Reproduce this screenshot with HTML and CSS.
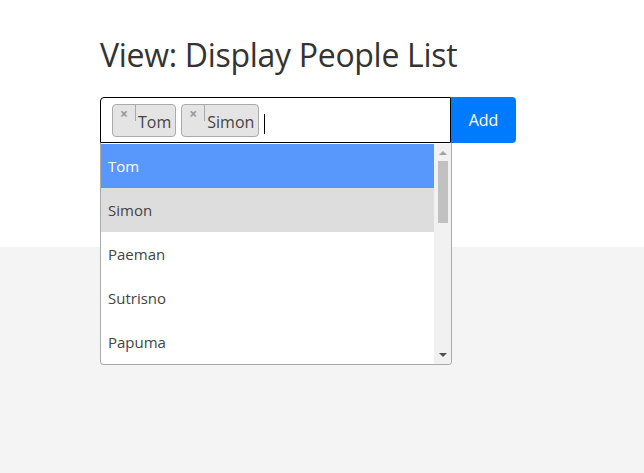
FILE: index.html
```html
<!DOCTYPE html>
<html lang="en">
<head>
  <meta charset="UTF-8" />
  <title>Display People List</title>
  <link rel="stylesheet" href="styles.css">
</head>
<body>
  <div class="top">
    <div class="container">
      <h1>View: Display People List</h1>

      <div class="input-group">
        <div class="picker">
          <div class="selection">
            <span class="tag"><span class="remove">×</span>Tom</span>
            <span class="tag"><span class="remove">×</span>Simon</span>
            <span class="caret"></span>
          </div>
          <div class="dropdown">
            <ul class="options">
              <li class="highlighted">Tom</li>
              <li class="selected">Simon</li>
              <li>Paeman</li>
              <li>Sutrisno</li>
              <li>Papuma</li>
            </ul>
            <div class="scrollbar">
              <span class="arrow up"></span>
              <span class="thumb"></span>
              <span class="arrow down"></span>
            </div>
          </div>
        </div>
        <button class="btn">Add</button>
      </div>
    </div>
  </div>
  <div class="bottom"></div>
</body>
</html>
```

FILE: styles.css
```css
html, body {
  height: 100%;
}

body {
  margin: 0;
  background: #fff;
  font-family: "Open Sans", "Noto Sans", sans-serif;
  color: #333;
  display: flex;
  flex-direction: column;
}

.top {
  background: #fff;
  height: 247px;
  flex: none;
  position: relative;
  z-index: 2;
}

.bottom {
  flex: 1;
  background: #f4f4f4;
}

.container {
  padding: 33px 0 0 100px;
}

h1 {
  margin: 0 0 20px;
  font-size: 32px;
  font-weight: 400;
  line-height: 44px;
  letter-spacing: -0.3px;
  color: #333;
}

.input-group {
  display: flex;
  align-items: flex-start;
}

.picker {
  position: relative;
  width: 351px;
}

.selection {
  box-sizing: border-box;
  height: 46px;
  border: 1px solid #000;
  border-radius: 4px 0 0 0;
  padding: 6px 0 0 11px;
  display: flex;
  align-items: flex-start;
  gap: 5px;
}

.tag {
  box-sizing: border-box;
  height: 33px;
  display: inline-flex;
  align-items: flex-start;
  background: #e4e4e4;
  border: 1px solid #aaa;
  border-radius: 4px;
  padding: 6px 4px 0 0;
  font-size: 16px;
  line-height: 22px;
  color: #444;
}

.tag .remove {
  box-sizing: border-box;
  height: 16px;
  margin-top: -6px;
  margin-right: 2px;
  padding: 1px 7px 0 7px;
  border-right: 1px solid #aaa;
  font-size: 14px;
  font-weight: 700;
  line-height: 15px;
  color: #999;
}

.caret {
  width: 1px;
  height: 20px;
  background: #000;
  margin: 10px 0 0 0;
}

.dropdown {
  position: absolute;
  top: 46px;
  left: 0;
  z-index: 5;
  box-sizing: border-box;
  width: 352px;
  padding-top: 1px;
  border: 1px solid #aaa;
  border-top: none;
  border-radius: 0 0 4px 4px;
  background: #fff;
  display: flex;
  overflow: hidden;
}

.options {
  list-style: none;
  margin: 0;
  padding: 0;
  flex: 1;
}

.options li {
  height: 44px;
  line-height: 44px;
  padding-left: 7px;
  font-size: 15px;
  color: #444;
}

.options li.highlighted {
  background: #5897fb;
  color: #fff;
}

.options li.selected {
  background: #ddd;
}

.scrollbar {
  width: 17px;
  background: #f1f1f1;
  display: flex;
  flex-direction: column;
  align-items: center;
}

.arrow {
  width: 0;
  height: 0;
  border-left: 4px solid transparent;
  border-right: 4px solid transparent;
}

.arrow.up {
  border-bottom: 4px solid #a3a3a3;
  margin-top: 7px;
}

.arrow.down {
  border-top: 4px solid #505050;
  margin-top: auto;
  margin-bottom: 7px;
}

.thumb {
  width: 10px;
  height: 62px;
  background: #c1c1c1;
  margin-top: 6px;
  flex: none;
}

.btn {
  width: 65px;
  height: 46px;
  border: none;
  border-radius: 0 4px 4px 0;
  background: #007bff;
  color: #fff;
  font-family: inherit;
  font-size: 16px;
  padding: 0;
}
```
